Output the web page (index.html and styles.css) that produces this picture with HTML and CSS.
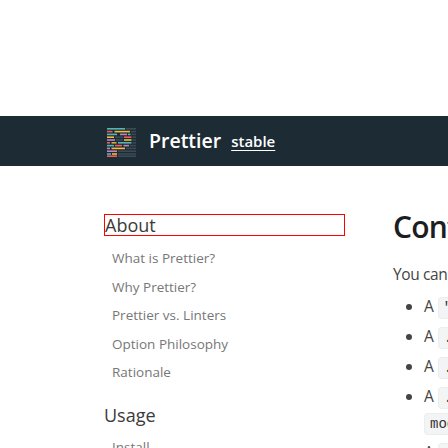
FILE: index.html
```html
<!DOCTYPE html>
<html>
<head>
<meta charset="utf-8">
<link rel="stylesheet" href="styles.css">
</head>
<body>
<div class="top-space"></div>
<header class="navbar">
  <svg class="logo" viewBox="0 0 29 29" width="29" height="29">
    <g>
      <rect x="0" y="0" width="18" height="1.6" fill="#56b3b4"/><rect x="18.6" y="0" width="10.4" height="1.6" fill="#3a4954"/>
      <rect x="0" y="2.8" width="5.5" height="1.6" fill="#ea5e5e"/><rect x="7.5" y="2.8" width="15.5" height="1.6" fill="#f7ba3e"/><rect x="24" y="2.8" width="5" height="1.6" fill="#3a4954"/>
      <rect x="0" y="5.6" width="10" height="1.6" fill="#56b3b4"/><rect x="13" y="5.6" width="7" height="1.6" fill="#bf85bf"/><rect x="21" y="5.6" width="2.5" height="1.6" fill="#56b3b4"/><rect x="24.5" y="5.6" width="4.5" height="1.6" fill="#3a4954"/>
      <rect x="0" y="8.4" width="7" height="1.6" fill="#f7ba3e"/><rect x="8" y="8.4" width="8" height="1.6" fill="#3a4954"/><rect x="17" y="8.4" width="7.5" height="1.6" fill="#ea5e5e"/><rect x="25.5" y="8.4" width="3.5" height="1.6" fill="#3a4954"/>
      <rect x="0" y="11.2" width="8" height="1.6" fill="#bf85bf"/><rect x="9" y="11.2" width="7" height="1.6" fill="#3a4954"/><rect x="17" y="11.2" width="7.5" height="1.6" fill="#f7ba3e"/><rect x="25.5" y="11.2" width="3.5" height="1.6" fill="#3a4954"/>
      <rect x="0" y="14" width="3" height="1.6" fill="#ea5e5e"/><rect x="4.5" y="14" width="5" height="1.6" fill="#d0a93c"/><rect x="11" y="14" width="13.5" height="1.6" fill="#56b3b4"/><rect x="25.5" y="14" width="3.5" height="1.6" fill="#3a4954"/>
      <rect x="0" y="16.8" width="7" height="1.6" fill="#56b3b4"/><rect x="8" y="16.8" width="7" height="1.6" fill="#ea5e5e"/><rect x="16.5" y="16.8" width="5.5" height="1.6" fill="#bf85bf"/><rect x="23" y="16.8" width="6" height="1.6" fill="#3a4954"/>
      <rect x="0" y="19.6" width="3" height="1.6" fill="#bf85bf"/><rect x="4.5" y="19.6" width="13.5" height="1.6" fill="#f7ba3e"/><rect x="19" y="19.6" width="10" height="1.6" fill="#3a4954"/>
      <rect x="0" y="22.4" width="10" height="1.6" fill="#bf85bf"/><rect x="11" y="22.4" width="18" height="1.6" fill="#3a4954"/>
      <rect x="0" y="25.2" width="4" height="1.6" fill="#56b3b4"/><rect x="5" y="25.2" width="5" height="1.6" fill="#f7ba3e"/><rect x="11" y="25.2" width="18" height="1.6" fill="#3a4954"/>
      <rect x="0" y="27.4" width="10" height="1.6" fill="#ea5e5e"/><rect x="11" y="27.4" width="18" height="1.6" fill="#3a4954"/>
    </g>
  </svg>
  <span class="brand">Prettier</span>
  <a class="version">stable</a>
</header>
<div class="page">
  <nav class="sidebar">
    <h3 class="cat cat-active">About</h3>
    <a class="link">What is Prettier?</a>
    <a class="link">Why Prettier?</a>
    <a class="link">Prettier vs. Linters</a>
    <a class="link">Option Philosophy</a>
    <a class="link">Rationale</a>
    <h3 class="cat cat-next">Usage</h3>
    <a class="link">Install</a>
  </nav>
  <main class="content">
    <h1 class="title">Configuration File</h1>
    <p class="lead">You can configure Prettier via (in order of precedence):</p>
    <ul class="list">
      <li>A <code>"prettier"</code> key in your <code>package.json</code> file.</li>
      <li>A <code>.prettierrc</code> file written in JSON or YAML.</li>
      <li>A <code>.prettierrc.json</code>, <code>.prettierrc.yml</code>, <code>.prettierrc.yaml</code>, or <code>.prettierrc.json5</code> file.</li>
      <li>A <code>.prettierrc.js</code>, <code>prettier.config.js</code>, <code>.prettierrc.mjs</code>, or <code>prettier.config.mjs</code> file that exports an object using<br><code>module.exports</code> or <code>export default</code>.</li>
      <li>A <code>.prettierrc.toml</code> file.</li>
    </ul>
  </main>
</div>
</body>
</html>
```
FILE: styles.css
```css
html, body {
  margin: 0;
  padding: 0;
  background: #fff;
}
body {
  width: 448px;
  height: 448px;
  overflow: hidden;
  font-family: "Open Sans", "Noto Sans", sans-serif;
}
.top-space {
  height: 116px;
}
.navbar {
  height: 50px;
  background: #1d2b34;
  display: flex;
  align-items: center;
  padding-left: 107px;
  box-sizing: border-box;
}
.logo {
  flex: none;
  margin-top: 2px;
  margin-right: 13px;
}
.brand {
  color: #fff;
  font-weight: 600;
  font-size: 19.5px;
  line-height: 1;
}
.version {
  color: #fff;
  font-weight: 600;
  font-size: 15px;
  line-height: 1;
  text-decoration: underline;
  text-underline-offset: 3px;
  margin-left: 10px;
}
.page {
  display: flex;
  gap: 48px;
  padding-left: 104px;
  width: 1200px;
}
.sidebar {
  flex: none;
  width: 241px;
  padding-top: 48px;
  display: flex;
  flex-direction: column;
}
.cat {
  margin: 0;
  font-size: 18px;
  font-weight: 400;
  line-height: 20px;
  color: #3a3a3a;
}
.cat-active {
  border: 1px solid #f00;
  margin-bottom: 8px;
}
.cat-next {
  margin-top: 18px;
  margin-bottom: 8px;
}
.link {
  display: block;
  padding-left: 8px;
  font-size: 13.5px;
  line-height: 28.6px;
  color: #777;
  white-space: nowrap;
}
.content {
  flex: none;
  width: 700px;
  padding-top: 41px;
  color: #1c1e21;
}
.title {
  margin: 0 0 15px;
  font-size: 30px;
  font-weight: 600;
  letter-spacing: -0.8px;
  line-height: 40px;
  white-space: nowrap;
}
.lead {
  margin: 0 0 8px;
  font-size: 15.5px;
  letter-spacing: -0.4px;
  line-height: 24px;
  color: #444;
  white-space: nowrap;
}
.list {
  margin: 0;
  padding-left: 31px;
  font-size: 15.5px;
  line-height: 24px;
  color: #444;
}
.list li {
  white-space: nowrap;
}
.list li + li {
  margin-top: 4px;
}
code {
  font-family: "Liberation Mono", monospace;
  font-size: 14px;
  background: #f3f4f5;
  border: 1px solid #eceded;
  border-radius: 4px;
  padding: 2px 5px;
  color: #333;
}
```
